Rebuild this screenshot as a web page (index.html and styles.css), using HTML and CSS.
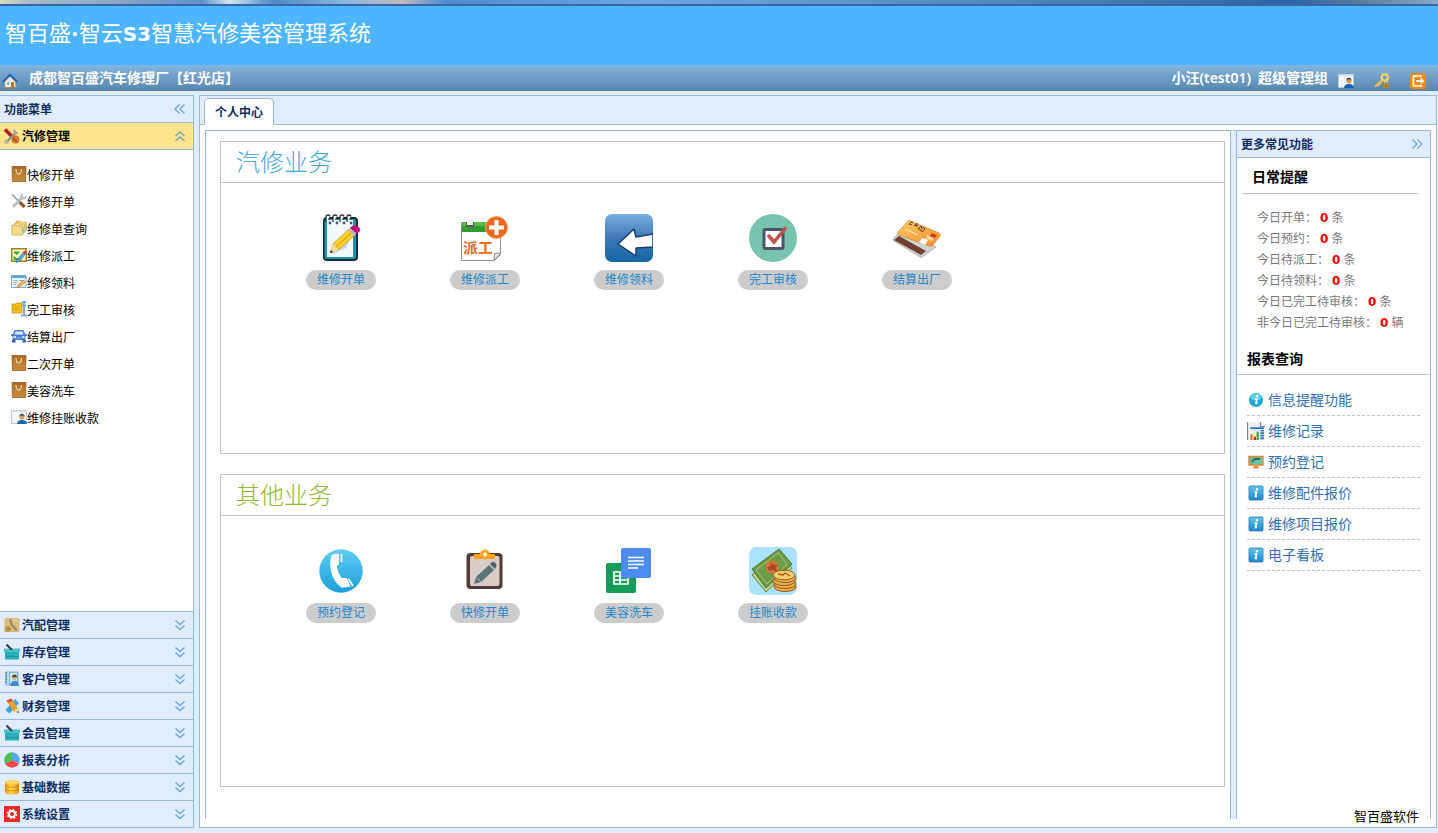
FILE: index.html
```html
<!DOCTYPE html>
<html lang="zh-CN">
<head>
<meta charset="utf-8">
<title>智百盛·智云S3智慧汽修美容管理系统</title>
<link rel="stylesheet" href="styles.css">
</head>
<body>
<svg class="sprite" aria-hidden="true">
  <defs>
    <linearGradient id="gArrow" x1="0" y1="0" x2="0" y2="1"><stop offset="0" stop-color="#79aee0"/><stop offset=".5" stop-color="#3d78b5"/><stop offset="1" stop-color="#1467a6"/></linearGradient>
    <linearGradient id="gPhone" x1="0" y1="0" x2="0" y2="1"><stop offset="0" stop-color="#5ecdf3"/><stop offset="1" stop-color="#1b9fd8"/></linearGradient>
    <linearGradient id="gCard" x1="0" y1="0" x2="1" y2="1"><stop offset="0" stop-color="#fbc968"/><stop offset="1" stop-color="#f0902a"/></linearGradient>
    <linearGradient id="gBag" x1="0" y1="0" x2="0" y2="1"><stop offset="0" stop-color="#a8682a"/><stop offset="1" stop-color="#d09040"/></linearGradient>
    <linearGradient id="gInfo" x1="0" y1="0" x2="0" y2="1"><stop offset="0" stop-color="#62c4ec"/><stop offset="1" stop-color="#1c86cc"/></linearGradient>
    <linearGradient id="gCoin" x1="0" y1="0" x2="1" y2="0"><stop offset="0" stop-color="#f08c10"/><stop offset=".4" stop-color="#ffdc50"/><stop offset="1" stop-color="#e89010"/></linearGradient>
  </defs>
  <symbol id="home" viewBox="0 0 16 16"><path d="M3 7v8h10.500V7L8 2z" fill="#f3ead8" stroke="#a89c88" stroke-width=".6"/><path d="M.8 9 8 2l7.200 7" fill="none" stroke="#2769b8" stroke-width="2.400"/><path d="M9 9h3v6H9z" fill="#b8772e"/><path d="M5 9h2.500v3H5z" fill="#8ab8e0"/><path d="M2 15h12" stroke="#7c8b55" stroke-width="1.500"/></symbol>
  <symbol id="usercard" viewBox="0 0 16 16"><path d="M.5 1.500h15v13H.5z" fill="#f4f8fa" stroke="#b9c9d2"/><path d="M.5 1.500h15V3H.5z" fill="#d2e1ea"/><circle cx="11" cy="8" r="2.500" fill="#d79a58"/><path d="M8.300 7.800c-.2-4 5.400-4 5.300 0l-1-1.200H9.500z" fill="#42352c"/><path d="M6 15c0-5.500 10-5.500 10 0z" fill="#1763b8"/></symbol>
  <symbol id="key" viewBox="0 0 16 16"><path d="m1 13.500 8-7M3.500 11.500l1.500 1.500M5.500 9.500 7 11" stroke="#f0c050" stroke-width="2.200"/><circle cx="10.800" cy="4.500" r="3.200" fill="none" stroke="#f6cd66" stroke-width="2.400"/><path d="M9.500 10.500h5V15h-5z" fill="#c98a13"/><path d="M10.700 10V8.500h2.700V10" fill="none" stroke="#d9c48a" stroke-width="1.200"/><path d="M12 12v1.500" stroke="#4e3909"/></symbol>
  <symbol id="exit" viewBox="0 0 16 16"><rect width="16" height="16" rx="2" fill="#f28a0e"/><path d="M11 4.200V3H3.500v10H11v-1.200" fill="none" stroke="#fff" stroke-width="1.700"/><path d="M6 8h6" stroke="#fff" stroke-width="1.800"/><path d="m10.500 4.800 4 3.200-4 3.200z" fill="#fff"/></symbol>
  <symbol id="chev-left" viewBox="0 0 16 16"><path d="M7.500 3.500 3 8l4.500 4.500M12.500 3.500 8 8l4.500 4.500" fill="none" stroke="#6b9fd6" stroke-width="1.300"/></symbol>
  <symbol id="chev-right" viewBox="0 0 16 16"><path d="m3.500 3.500 4.500 4.500-4.500 4.500m5-9L13 8l-4.500 4.500" fill="none" stroke="#6ba9e0" stroke-width="1.300"/></symbol>
  <symbol id="chev-up" viewBox="0 0 16 16"><path d="m3.500 8 4.500-4 4.500 4m-9 5L8 9l4.500 4" fill="none" stroke="#6fa9b4" stroke-width="1.400"/></symbol>
  <symbol id="chev-down" viewBox="0 0 16 16"><path d="m3.500 3.500 4.500 4 4.500-4m-9 5 4.500 4 4.500-4" fill="none" stroke="#6ba5de" stroke-width="1.400"/></symbol>
  <symbol id="wrench-red" viewBox="0 0 16 16"><path d="m1 1.500 7 7" stroke="#b81d24" stroke-width="3.600"/><path d="m3 13.500 9.500-9.500" stroke="#8d9093" stroke-width="2.400"/><path d="M11 .8c-2 1-2 3-1 4.700 1.500 1.300 4 .8 5-1.300l-2.500.3L11.500 3z" fill="#a6a9ab"/><circle cx="2.500" cy="13.700" r="1.500" fill="none" stroke="#a6a9ab" stroke-width="1.300"/><circle cx="11.500" cy="11.500" r="4" fill="#d87635"/><path d="m9 10 4.500 4.500" stroke="#a94b1e" stroke-width="1.400"/></symbol>
  <symbol id="bag" viewBox="0 0 16 16"><path d="M1 .5h14l-.4 15H1.400z" fill="url(#gBag)" stroke="#8d5a20" stroke-width=".8"/><path d="M5 3c0 6.500 5.500 6.500 5.500 0" fill="none" stroke="#ecd79c" stroke-width="1.200"/><path d="M1.500 13h13" stroke="#b57a30"/></symbol>
  <symbol id="tools" viewBox="0 0 16 16"><path d="m1 1.500 7.500 7.500" stroke="#a7afb4" stroke-width="1.800"/><path d="m8.500 9 5 5" stroke="#995530" stroke-width="3.200"/><path d="m2 14 9-9.500" stroke="#b7bec3" stroke-width="2.600"/><path d="M11.500.5C9.500 1.500 9 4 10.300 5.700c2 1.200 4.200.2 5.200-2.200l-2.700.8-1.300-1.300z" fill="#c3c9cc" stroke="#9ca5aa" stroke-width=".5"/></symbol>
  <symbol id="folders" viewBox="0 0 16 16"><g stroke="#cb9c39" stroke-width=".7"><path d="M5.500 1h4l1 1.200h5v8h-10z" fill="#f6dc88"/><path d="M3.500 3h4l1 1.200h5v8h-10z" fill="#f9e29a"/><path d="M1 5h4l1 1.200h5.500v8.800H1z" fill="#f7d887"/></g><path d="M11.800 7v8l3-3.500V6" fill="#b8c8a0"/></symbol>
  <symbol id="dispatch" viewBox="0 0 16 16"><path d="M.7 1.700h14.600v12.600H.7z" fill="#f8f4c4" stroke="#9d8219" stroke-width="1.400"/><path d="M3 4.500h6L6 8 3 6zM2.500 9l3 2h5v2h-8z" fill="#36a936"/><path d="m6 13 7-8.500 2 2-7 8-2.500 1z" fill="#5aabea" stroke="#1f5e9f" stroke-width=".6"/><path d="m12 5.500 2-2 2 2-2 2z" fill="#c94447"/></symbol>
  <symbol id="form" viewBox="0 0 16 16"><path d="M.5 1.500h14.500v12H.5z" fill="#eef5fa" stroke="#7aabce"/><path d="M.5 1.500H15v2.500H.5z" fill="#5aa4da"/><path d="M2.500 6.500h4M2.500 8.500h4M2.500 10.500h3M8 6.500h5" stroke="#9aabba"/><path d="m6 14 1-3 5.500-5 2 2L9 13z" fill="#f2b66c" stroke="#b07436" stroke-width=".6"/></symbol>
  <symbol id="zip" viewBox="0 0 16 16"><path d="M1 3h4l1-1h5v10H1z" fill="#f5c21f" stroke="#b98b19" stroke-width=".7"/><path d="M2 6h7M2 8.500h7" stroke="#dc9813"/><path d="M11 1h4M13 1v13M10.500 4.500H15M10 14.500h6" stroke="#7ea9d8" stroke-width="2"/></symbol>
  <symbol id="car" viewBox="0 0 16 16"><path d="m3.500 2-2 5v5h13V7l-2-5z" fill="#4b7fd2"/><path d="M4.500 3.500h7l1 3h-9z" fill="#dcecff"/><path d="M0 7h2M14 7h2" stroke="#3464b4" stroke-width="1.500"/><path d="M2.500 9h2.500M11 9h2.500" stroke="#fff" stroke-width="1.500"/><path d="M5.500 10h5" stroke="#8fb7ef"/><path d="M1 12h3.500v2.500H1zm10.500 0H15v2.500h-3.500z" fill="#3763ad"/></symbol>
  <symbol id="parts" viewBox="0 0 16 16"><rect x=".5" y="1" width="15" height="14" rx="1.500" fill="#dcbc7a"/><path d="M6 2 8 8.500l5 5" stroke="#8f8773" stroke-width="2" fill="none"/><path d="M1 9h5v6H1z" fill="#c99f58"/><path d="M3 12h4" stroke="#7b633a"/><path d="m9 2 2 2 3-1" stroke="#f1e2b8" fill="none"/></symbol>
  <symbol id="basket" viewBox="0 0 16 16"><path d="M1 7h14v8.500H1z" fill="#2badba"/><path d="M0 4.500h16V8H0z" fill="#49c1cc"/><path d="m2.500.5 5.500 5.500" stroke="#3d4348" stroke-width="2.200"/><path d="M2 12.500h12" stroke="#20929f"/></symbol>
  <symbol id="contacts" viewBox="0 0 16 16"><rect x="1.500" y=".5" width="13" height="14" rx="1" fill="#7eb5de"/><path d="M3.500 1h1v13h-1z" fill="#f5f8fb"/><path d="M1 2h2M1 5h2M1 8h2M1 11h2" stroke="#5e7280"/><path d="M6 2h7v10H6z" fill="#cde3f3"/><circle cx="10.500" cy="6.500" r="2.400" fill="#dda167"/><path d="M8 6c0-3.500 5-3.500 5 0z" fill="#553e2b"/><path d="M6.500 15c0-7 8.500-7 8.500 0z" fill="#3f8dd0"/></symbol>
  <symbol id="design" viewBox="0 0 16 16"><path d="M1.500 12 11 1l4 4-9.500 10.500z" fill="#38a4de"/><path d="m2.500 2.500 5-2 6.500 10 .5 4.500L9 13z" fill="#f1a329"/><path d="m2.500 2.500 5-2L9 3 4 5z" fill="#dc554c"/><path d="m9.500 13 4.500-2.500.5 4.500z" fill="#f5deb5"/><path d="m12.800 14 1.700 1-.2-2z" fill="#222"/></symbol>
  <symbol id="pie" viewBox="0 0 16 16"><path d="M8 8V.2a8 8 0 0 1 6.900 11.500z" fill="#54a8e8"/><path d="m8 8 6.900 3.700a8 8 0 0 1-13.800 0z" fill="#e74c4c"/><path d="m8 8-6.900 3.700A8 8 0 0 1 8 .2z" fill="#4dbd55"/></symbol>
  <symbol id="database" viewBox="0 0 16 16"><path d="M1 3v10c0 3.500 14 3.500 14 0V3z" fill="url(#gCoin)"/><ellipse cx="8" cy="3" rx="7" ry="2.300" fill="#fbd867"/><path d="M1 6c0 3 14 3 14 0M1 9.500c0 3 14 3 14 0" fill="none" stroke="#c97c0c" stroke-width=".8"/></symbol>
  <symbol id="gear" viewBox="0 0 16 16"><path d="M0 0h16v16H0z" fill="#ee2a22"/><circle cx="8" cy="8" r="4.500" fill="none" stroke="#fff" stroke-width="1.500" stroke-dasharray="1.770 1.764"/><circle cx="8" cy="8" r="3" fill="none" stroke="#fff" stroke-width="1.800"/></symbol>
  <symbol id="info-round" viewBox="0 0 16 16"><circle cx="8" cy="8" r="7" fill="#1ba9d9"/><ellipse cx="8" cy="5" rx="5.500" ry="3.500" fill="#62d0ec"/><path d="M7 7h2l-1 4.500h1.500" fill="none" stroke="#fff" stroke-width="1.700"/><circle cx="9" cy="4" r="1.200" fill="#fff"/></symbol>
  <symbol id="info-square" viewBox="0 0 16 16"><rect x="1" y="1" width="14" height="14" rx="1" fill="url(#gInfo)" stroke="#2278b5" stroke-width=".8"/><path d="M6.500 7h2l-1 4.500H9" fill="none" stroke="#fff" stroke-width="1.700"/><circle cx="9" cy="4.200" r="1.200" fill="#fff"/></symbol>
  <symbol id="report" viewBox="0 0 16 16"><path d="M.5 0H12l4 4v12H.5z" fill="#edf1f3"/><path d="M.5 0v16M12 0v4h4" fill="none" stroke="#718593"/><path d="M3 5.500h12" stroke="#1c6fc4" stroke-width="1.600"/><path d="M4 11v5" stroke="#e67b15" stroke-width="2"/><path d="M7 13v3" stroke="#ce2620" stroke-width="2"/><path d="M9.500 8.500V16" stroke="#38ae2c" stroke-width="2"/><path d="M13.500 7v9" stroke="#2b72bd" stroke-width="3" stroke-dasharray="1.500 .7"/></symbol>
  <symbol id="monitor" viewBox="0 0 16 16"><path d="M1 2.500h14v8.500H1z" fill="#63c5a2" stroke="#e08636" stroke-width="1.400"/><path d="M4 8c2-4 4-3 8-3" fill="none" stroke="#39504b" stroke-width="1.700"/><path d="M6 11.500h4l1 3H5z" fill="#ed923b"/></symbol>

  <symbol id="notepad" viewBox="0 0 48 48"><rect x="6" y="3" width="35" height="44" rx="4" fill="#142b36"/><rect x="7.500" y="5" width="31.500" height="40" rx="2.500" fill="#2392aa"/><path d="M10 6h26v37H10z" fill="#f2fafc"/><g fill="#fff" stroke="#27343b" stroke-width="1.300"><path d="M9 8V2.500c0-2 4-2 4 0M16 8V2.500c0-2 4-2 4 0M23 8V2.500c0-2 4-2 4 0M30 8V2.500c0-2 4-2 4 0"/></g><g fill="#475964"><circle cx="13" cy="9" r="1.400"/><circle cx="20" cy="9" r="1.400"/><circle cx="27" cy="9" r="1.400"/><circle cx="34" cy="9" r="1.400"/></g><path d="m15 39 18-14-4 9-14 6z" fill="#cbd6d9"/><path d="m13 39 3-9 16-15 6 6-16 14z" fill="#fad22d" stroke="#c29118" stroke-width=".7"/><path d="m15.500 30 6 6-8.500 3z" fill="#f6dca2"/><path d="m13 39 1-3 2 2z" fill="#222"/><path d="m19 33 15-14" stroke="#e8a71c" stroke-width="1.500"/><path d="m31 16 3-3 6 6-3 3z" fill="#bcb8bd"/><path d="m33 14 2-2c3-2 10 2 8 5l-3 3z" fill="#c2107c"/></symbol>
  <symbol id="arrow-big" viewBox="0 0 48 48"><rect width="48" height="48" rx="7" fill="url(#gArrow)"/><path d="m13 30 16-15 2 8 17-3v13l-17 1v8z" fill="#fff" stroke="#183e72" stroke-width="1.500" stroke-linejoin="round"/></symbol>
  <symbol id="check-big" viewBox="0 0 48 48"><circle cx="24" cy="24" r="24" fill="#78c3ad"/><rect x="15" y="15.500" width="19" height="19" rx="1.500" fill="#fff" stroke="#495568" stroke-width="3"/><path d="m19 21 6 7 12-14.500" fill="none" stroke="#c0504e" stroke-width="3.500"/></symbol>
  <symbol id="card-big" viewBox="0 0 48 48"><path d="m0 25 7-7 36 15-14 10q-1 1-2 0L1 27z" fill="#d1d2d0" stroke="#999" stroke-width=".7"/><path d="m1 26 5-4 27 15-5 4z" fill="#713f34"/><path d="M5 18 15 7q1-1 3 0l28 12q2 1 1 3l-7 9q-1 2-4 1L6 21q-2-1-1-3z" fill="url(#gCard)" stroke="#c67b20" stroke-width=".6"/><path d="m39 19 5 2-3 4-5-2z" fill="#dd3720"/><path d="m29 24 6 2-3 5-6-3z" fill="#fff"/><path d="m34 21 7 3-2 3-6-2z" fill="#f9d49a"/><path d="m20 9-2-1-2 2 3 1m2 1 3-3v4m-2-1.500h2m1 3.500 3-3 1 1-1 1m-2 0v2m1 .5 3-3 2 1-2 3z" fill="none" stroke="#684019"/><path d="m12 15 13 6" stroke="#fff0c9"/></symbol>
  <symbol id="phone-big" viewBox="0 0 48 48"><circle cx="24" cy="24" r="21.700" fill="url(#gPhone)"/><path d="M14.700 8q3-1.500 7.300-1.500v10l-2.300 3Q21 26 24.700 31h5l4 8.500-9 1.200q-6-4.500-9-11-4.500-12-1-21.700z" fill="#fff"/><path d="M24.500 7v8M31.500 32l4.500 7" stroke="#fff" stroke-width="1.700"/></symbol>
  <symbol id="clip-big" viewBox="0 0 48 48"><rect x="5.500" y="6" width="36" height="36" rx="4" fill="#523a36"/><rect x="9" y="9" width="29.500" height="30" rx="2" fill="#d8ccc8"/><path d="M13 12V7h6c1-6 9-6 10 0h5v5z" fill="#ffa313"/><circle cx="24" cy="7.500" r="2" fill="#fff"/><path d="m13 37 2-7 13-12 5 5-13 12z" fill="#5c717a"/><path d="m15 30 5 5" stroke="#d8ccc8" stroke-width=".7"/><path d="m29 17 2-2c2-1 6 3 4 5l-1 2z" fill="#4d626c"/></symbol>
  <symbol id="docs-big" viewBox="0 0 48 48"><rect x="1" y="16" width="30" height="30" rx="2" fill="#149c58"/><path d="M9 25h14v12H9zM9 29h14M9 33h14M15 25v12" fill="none" stroke="#fff" stroke-width="1.700"/><rect x="16" y="1" width="30" height="30" rx="2" fill="#4c8bf0"/><path d="M23 10.500h16M23 14h16M23 17.500h16M23 21h10" stroke="#fff" stroke-width="1.700"/></symbol>
  <symbol id="money-big" viewBox="0 0 48 48"><rect width="48" height="48" rx="7" fill="#abe2ff"/><path d="m3 28 14 17 26-24L30 4z" fill="#bed187" stroke="#638840"/><path d="M3 22 30 2l13 15-26 24z" fill="#6c9a46" stroke="#4c7c39"/><path d="M7 23 29 6l9 11-20 20z" fill="none" stroke="#a9c978"/><circle cx="23" cy="20" r="6.500" fill="#dc7932"/><path d="m18 20 4-1-1-4 4 3 4-1-2 4 1 4-4-2-4 1z" fill="#ad482a"/><g fill="#e9af45" stroke="#935a23"><ellipse cx="36" cy="40" rx="11" ry="4.500"/><ellipse cx="36" cy="37" rx="11" ry="4.500"/><ellipse cx="35" cy="34" rx="11" ry="4.500"/><ellipse cx="36" cy="31" rx="11" ry="4.500"/><ellipse cx="35" cy="28" rx="11" ry="4.800" fill="#f8cf69"/></g><path d="m29 27 5 1 2-2 5 3" fill="none" stroke="#965b24" stroke-width="1.300"/></symbol>
</svg>

<div class="app">
  <div class="window-edge"></div>
  <header>
    <h1 class="banner">智百盛<b>·</b>智云<b>S3</b>智慧汽修美容管理系统</h1>
    <div class="userbar">
      <svg class="icon"><use href="#home"/></svg>
      <strong class="shop">成都智百盛汽车修理厂【红光店】</strong>
      <strong class="user">小汪(test01)&ensp;超级管理组</strong>
      <div class="actions">
        <button type="button" aria-label="用户信息"><svg class="icon"><use href="#usercard"/></svg></button>
        <button type="button" aria-label="修改密码"><svg class="icon"><use href="#key"/></svg></button>
        <button type="button" aria-label="退出"><svg class="icon"><use href="#exit"/></svg></button>
      </div>
    </div>
  </header>

  <div class="body">
    <nav class="sidebar">
      <div class="panel-head"><h2>功能菜单</h2><button type="button" aria-label="收起菜单"><svg class="icon"><use href="#chev-left"/></svg></button></div>
      <button type="button" class="accordion open"><svg class="icon"><use href="#wrench-red"/></svg><span>汽修管理</span><svg class="icon"><use href="#chev-up"/></svg></button>
      <ul class="menu">
        <li><a href="#"><svg class="icon"><use href="#bag"/></svg>快修开单</a></li>
        <li><a href="#"><svg class="icon"><use href="#tools"/></svg>维修开单</a></li>
        <li><a href="#"><svg class="icon"><use href="#folders"/></svg>维修单查询</a></li>
        <li><a href="#"><svg class="icon"><use href="#dispatch"/></svg>维修派工</a></li>
        <li><a href="#"><svg class="icon"><use href="#form"/></svg>维修领料</a></li>
        <li><a href="#"><svg class="icon"><use href="#zip"/></svg>完工审核</a></li>
        <li><a href="#"><svg class="icon"><use href="#car"/></svg>结算出厂</a></li>
        <li><a href="#"><svg class="icon"><use href="#bag"/></svg>二次开单</a></li>
        <li><a href="#"><svg class="icon"><use href="#bag"/></svg>美容洗车</a></li>
        <li><a href="#"><svg class="icon"><use href="#usercard"/></svg>维修挂账收款</a></li>
      </ul>
      <button type="button" class="accordion"><svg class="icon"><use href="#parts"/></svg><span>汽配管理</span><svg class="icon"><use href="#chev-down"/></svg></button>
      <button type="button" class="accordion"><svg class="icon"><use href="#basket"/></svg><span>库存管理</span><svg class="icon"><use href="#chev-down"/></svg></button>
      <button type="button" class="accordion"><svg class="icon"><use href="#contacts"/></svg><span>客户管理</span><svg class="icon"><use href="#chev-down"/></svg></button>
      <button type="button" class="accordion"><svg class="icon"><use href="#design"/></svg><span>财务管理</span><svg class="icon"><use href="#chev-down"/></svg></button>
      <button type="button" class="accordion"><svg class="icon"><use href="#basket"/></svg><span>会员管理</span><svg class="icon"><use href="#chev-down"/></svg></button>
      <button type="button" class="accordion"><svg class="icon"><use href="#pie"/></svg><span>报表分析</span><svg class="icon"><use href="#chev-down"/></svg></button>
      <button type="button" class="accordion"><svg class="icon"><use href="#database"/></svg><span>基础数据</span><svg class="icon"><use href="#chev-down"/></svg></button>
      <button type="button" class="accordion"><svg class="icon"><use href="#gear"/></svg><span>系统设置</span><svg class="icon"><use href="#chev-down"/></svg></button>
    </nav>

    <div class="workspace">
      <div class="tabs"><button type="button" class="tab">个人中心</button></div>
      <div class="tab-body">
        <main class="center">
          <section class="card">
            <h2>汽修业务</h2>
            <div class="shortcuts">
              <a href="#"><svg><use href="#notepad"/></svg><span>维修开单</span></a>
              <a href="#"><svg viewBox="0 0 48 48"><path d="M.5 8.500h39v32l-6 6H.5z" fill="#fff" stroke="#91918c"/><path d="M1 8h39v10H1z" fill="#329c31"/><path d="M1 8h39v4H1z" fill="#58bb43"/><path d="M5 8h8v5H5z" fill="#555"/><path d="M6 7h6v4H6z" fill="#eee"/><path d="m40 39-7 7.500.7-7z" fill="#e8e8e5" stroke="#91918c"/><text x="2" y="39" class="stamp">派工</text><circle cx="35.500" cy="13.500" r="11" fill="#ec6720" stroke="#f7a35f"/><path d="M35.500 6v15M28 13.500h15" stroke="#fff" stroke-width="4"/></svg><span>维修派工</span></a>
              <a href="#"><svg><use href="#arrow-big"/></svg><span>维修领料</span></a>
              <a href="#"><svg><use href="#check-big"/></svg><span>完工审核</span></a>
              <a href="#"><svg><use href="#card-big"/></svg><span>结算出厂</span></a>
            </div>
          </section>
          <section class="card other">
            <h2>其他业务</h2>
            <div class="shortcuts">
              <a href="#"><svg><use href="#phone-big"/></svg><span>预约登记</span></a>
              <a href="#"><svg><use href="#clip-big"/></svg><span>快修开单</span></a>
              <a href="#"><svg><use href="#docs-big"/></svg><span>美容洗车</span></a>
              <a href="#"><svg><use href="#money-big"/></svg><span>挂账收款</span></a>
            </div>
          </section>
        </main>
        <aside class="east">
          <div class="panel-head"><h2>更多常见功能</h2><button type="button" aria-label="收起"><svg class="icon"><use href="#chev-right"/></svg></button></div>
          <h3 class="remind-title">日常提醒</h3>
          <ul class="reminders">
            <li>今日开单：<b>0</b>条</li>
            <li>今日预约：<b>0</b>条</li>
            <li>今日待派工：<b>0</b>条</li>
            <li>今日待领料：<b>0</b>条</li>
            <li>今日已完工待审核：<b>0</b>条</li>
            <li>非今日已完工待审核：<b>0</b>辆</li>
          </ul>
          <h3 class="report-title">报表查询</h3>
          <ul class="reports">
            <li><a href="#"><svg class="icon"><use href="#info-round"/></svg>信息提醒功能</a></li>
            <li><a href="#"><svg class="icon large"><use href="#report"/></svg>维修记录</a></li>
            <li><a href="#"><svg class="icon"><use href="#monitor"/></svg>预约登记</a></li>
            <li><a href="#"><svg class="icon"><use href="#info-square"/></svg>维修配件报价</a></li>
            <li><a href="#"><svg class="icon"><use href="#info-square"/></svg>维修项目报价</a></li>
            <li><a href="#"><svg class="icon"><use href="#info-square"/></svg>电子看板</a></li>
          </ul>
        </aside>
        <small class="brand">智百盛软件</small>
      </div>
    </div>
  </div>
</div>
</body>
</html>
```

FILE: styles.css
```css
* { box-sizing: border-box; }
body {
  margin: 0;
  font: 12px/20px "Noto Sans", "Noto Sans CJK SC", sans-serif;
  color: #000;
}
h1, h2, h3, ul { margin: 0; padding: 0; font-size: inherit; }
ul { list-style: none; }
a { color: inherit; text-decoration: none; }
button { margin: 0; padding: 0; border: 0; background: none; color: inherit; font: inherit; cursor: pointer; }
.sprite { position: absolute; width: 0; height: 0; }
.icon { display: block; flex: none; width: 16px; height: 16px; }

.app { display: flex; flex-direction: column; height: 100vh; min-height: 600px; background: #e0ecff; }
.window-edge {
  flex: none;
  height: 6px;
  border-bottom: 2px solid #37699f;
  background: linear-gradient(90deg, #d9dcc0 0, #a9bccb 2%, #8fa5c4 8%, #5f8fd0 14%, #d5e5ef 16%, #4f86c8 19%, #8cb8df 24%, #c3b7bd 28%, #4d8bd4 31%, #6ba5e5 45%, #5186c0 70%, #2e64a8 90%, #55789d 94%, #8ba8c4 100%);
}
.banner { height: 59px; padding: 10px 5px; background: #4db5ff; color: #fff; font-size: 22px; line-height: 32px; font-weight: 400; }
.banner b { font-family: "DejaVu Sans", sans-serif; font-size: 20px; }
.userbar {
  display: flex;
  align-items: center;
  height: 26px;
  padding: 0 12px 0 2px;
  background: linear-gradient(#84b5dd, #5785ae);
  color: #fff;
  font-size: 14px;
}
.userbar .icon { margin-top: 6px; }
.userbar strong { font-weight: 600; }
.shop { margin-left: 11px; }
.user { margin-left: auto; }
.actions { display: flex; gap: 20px; margin-left: 10px; }

.body { display: flex; flex: 1; min-height: 0; padding: 4px 1px 5px 0; gap: 5px; }
.sidebar { display: flex; flex-direction: column; flex: none; width: 194px; border: 1px solid #95b8e7; border-width: 1px 1px 0 0; background: #fff; }
.panel-head, .accordion {
  display: flex;
  align-items: center;
  flex: none;
  height: 27px;
  padding: 2px 5px 0 4px;
  border-bottom: 1px solid #95b8e7;
  background: #e0ecff;
  color: #0e2d5f;
  font-weight: 700;
  text-align: left;
}
.panel-head { justify-content: space-between; }
.panel-head .icon, .accordion .icon { margin-bottom: 2px; }
.accordion span { flex: 1; padding-left: 2px; }
.accordion.open { background: #ffe48d; color: #000; }
.menu { flex: 1; padding: 11px 0 0 11px; overflow: hidden; border-bottom: 1px solid #95b8e7; }
.menu a { display: flex; align-items: center; height: 27px; padding-top: 2px; }
.menu .icon { margin-bottom: 4px; }

.workspace { display: flex; flex: 1; flex-direction: column; min-width: 0; border: 1px solid #95b8e7; background: #fff; }
.tabs { display: flex; align-items: flex-end; flex: none; height: 29px; padding-left: 4px; border-bottom: 1px solid #95b8e7; background: #e0ecff; }
.tab { height: 27px; margin-bottom: -1px; padding: 2px 10px 0; border: 1px solid #95b8e7; border-bottom-color: #fff; border-radius: 5px 5px 0 0; background: #fff; color: #0e2d5f; font-weight: 700; }
.tab-body { position: relative; display: flex; flex: 1; min-height: 0; padding: 5px 5px 8px; }
.center { flex: 1; min-width: 0; padding: 10px 5px 0 14px; overflow: hidden; border: 1px solid #95b8e7; border-bottom: 0; }
.card { height: 313px; margin-bottom: 20px; border: 1px solid #c0c0c0; }
.card h2 { height: 41px; padding-left: 15px; border-bottom: 1px solid #c0c0c0; color: #46a8d8; font-size: 24px; line-height: 40px; font-weight: 300; }
.card.other h2 { color: #8fb836; }
.shortcuts { display: flex; flex-wrap: wrap; padding: 31px 48px 0; }
.shortcuts a { display: flex; flex-direction: column; align-items: center; gap: 8px; width: 144px; color: #2287cc; }
.shortcuts svg { width: 48px; height: 48px; }
.shortcuts span { width: 70px; border-radius: 10px; background: #ccc; text-align: center; }
.stamp { font: 700 15px "Noto Sans CJK SC", sans-serif; fill: #ed6a1f; }

.east { flex: none; width: 200px; overflow: hidden; border: 1px solid #95b8e7; border-width: 1px 1px 0 1px; border-left: 5px solid #e0ecff; box-shadow: inset 1px 0 #95b8e7; }
.east .panel-head { border-left: 1px solid #95b8e7; }
.remind-title { margin: 0 12px 13px 6px; padding: 2px 0 0 10px; border-bottom: 1px solid #c0c0c0; font-size: 14px; line-height: 33px; }
.reminders { padding-left: 21px; color: #777; }
.reminders li { height: 21px; line-height: 21px; }
.reminders b { padding: 0 3px; color: #e00; font-family: "DejaVu Sans", sans-serif; }
.report-title { margin: 10px 0 10px 1px; padding-left: 10px; border-bottom: 1px solid #c0c0c0; font-size: 14px; line-height: 31px; }
.reports { margin: 0 10px 0 11px; color: #2e6fb4; font-size: 14px; }
.reports a { display: flex; align-items: center; gap: 4px; height: 31px; padding-left: 1px; border-bottom: 1px dashed #c0c0c0; }
.large { width: 18px; height: 18px; margin: 0 -1px; }
.brand { position: absolute; right: 17px; bottom: 1px; font-size: 13px; }
```
